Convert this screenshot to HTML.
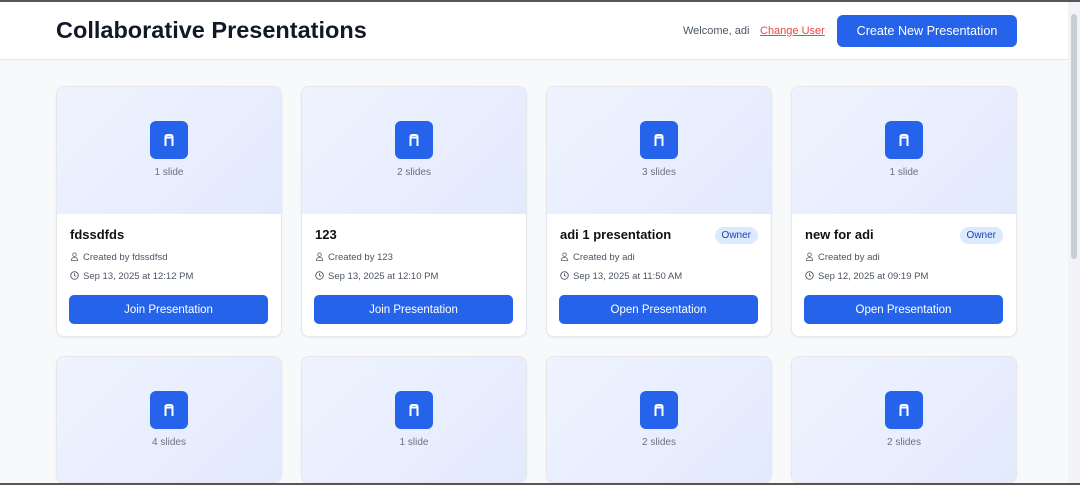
<!DOCTYPE html>
<html><head><style>
*{box-sizing:border-box;margin:0;padding:0}
html,body{width:1080px;height:485px;overflow:hidden}
body{background:#f8f9fa;font-family:"Liberation Sans",sans-serif;position:relative}
.topbar{position:absolute;top:0;left:0;width:1080px;height:2px;background:#5a5458;z-index:5}
.botbar{position:absolute;top:483px;left:0;width:1080px;height:2px;background:#5a5458;z-index:5}
.sb{position:absolute;right:0;top:2px;width:12px;height:481px;background:#f1f3f7}
.sb i{position:absolute;left:3px;top:12px;width:6px;height:245px;background:#c8ced8;border-radius:3px}
header{position:absolute;top:2px;left:0;width:1068px;height:58px;background:#fff;border-bottom:1px solid #e5e7eb}
h1{position:absolute;left:56px;top:15px;font-size:23.5px;font-weight:700;color:#111827}
.wel{position:absolute;left:683px;top:23px;font-size:11px;color:#4b5563}
.cu{position:absolute;left:760px;top:23px;font-size:11px;color:#ef4444;text-decoration:underline}
.cnp{position:absolute;left:837px;top:13px;width:180px;height:32px;background:#2563eb;color:#fff;border-radius:6px;font-size:12.6px;text-align:center;line-height:32px}
.card{position:absolute;width:226px;height:251px;background:#fff;border:1px solid #e5e7eb;border-radius:8px;overflow:hidden;box-shadow:0 1px 2px rgba(0,0,0,.05)}
.th{height:127px;background:linear-gradient(135deg,#eff3fe,#e3eafd);position:relative}
.ic{position:absolute;left:93px;top:34px;width:38px;height:38px;background:#2563eb;border-radius:6px}
.ic svg{position:absolute;left:12px;top:11px}
.sl{position:absolute;top:80px;width:100%;text-align:center;font-size:10px;color:#6b7280}
.t{position:absolute;left:13px;top:140px;font-size:13px;font-weight:700;color:#111}
.own{position:absolute;right:13px;top:140px;height:17px;line-height:17px;background:#dbeafe;color:#1e40af;font-size:10px;padding:0 7px;border-radius:9px}
.m{position:absolute;left:13px;font-size:9.5px;color:#4b5563}
.b{position:absolute;left:12px;top:208px;width:199px;height:29px;background:#2563eb;color:#fff;border-radius:5px;text-align:center;line-height:30px;font-size:11.5px}
</style></head><body>
<div class="topbar"></div>
<header><h1>Collaborative Presentations</h1><span class="wel">Welcome, adi</span><span class="cu">Change User</span><div class="cnp">Create New Presentation</div></header>
<div class="sb"><i></i></div>
<div class="botbar"></div>
<div id="c"></div>
<script>
const d=[["fdssdfds","fdssdfsd","Sep 13, 2025 at 12:12 PM","1 slide",0],["123","123","Sep 13, 2025 at 12:10 PM","2 slides",0],["adi 1 presentation","adi","Sep 13, 2025 at 11:50 AM","3 slides",1],["new for adi","adi","Sep 12, 2025 at 09:19 PM","1 slide",1]];
const s2=["4 slides","1 slide","2 slides","2 slides"];
const ic='<div class="ic"><svg width="14" height="16" viewBox="0 0 14 16"><path d="M3.5 14V5Q3.5 3 5.5 3H8.5Q10.5 3 10.5 5V14M3.5 5.5H10.5" fill="none" stroke="#fff" stroke-width="2"/></svg></div>';
const pu='<svg width="9" height="9" viewBox="0 0 10 10" style="vertical-align:-1px;margin-right:4px"><circle cx="5" cy="3" r="2" fill="none" stroke="#6b7280"/><path d="M1.5 9.5Q1.5 6 5 6Q8.5 6 8.5 9.5Z" fill="none" stroke="#6b7280"/></svg>';
const ck='<svg width="9" height="9" viewBox="0 0 10 10" style="vertical-align:-1px;margin-right:4px"><circle cx="5" cy="5" r="4.2" fill="none" stroke="#4b5563"/><path d="M5 2.5V5L6.8 6" fill="none" stroke="#4b5563"/></svg>';
let h='';
d.forEach((c,i)=>{h+=`<div class="card" style="left:${56+245*i}px;top:86px"><div class="th">${ic}<div class="sl">${c[3]}</div></div><div class="t">${c[0]}</div>${c[4]?'<span class="own">Owner</span>':''}<div class="m" style="top:165px">${pu}Created by ${c[1]}</div><div class="m" style="top:184px">${ck}${c[2]}</div><div class="b">${c[4]?'Open':'Join'} Presentation</div></div>`;});
s2.forEach((s,i)=>{h+=`<div class="card" style="left:${56+245*i}px;top:356px;height:127px"><div class="th">${ic}<div class="sl">${s}</div></div></div>`;});
document.getElementById('c').innerHTML=h;
</script>
</body></html>
